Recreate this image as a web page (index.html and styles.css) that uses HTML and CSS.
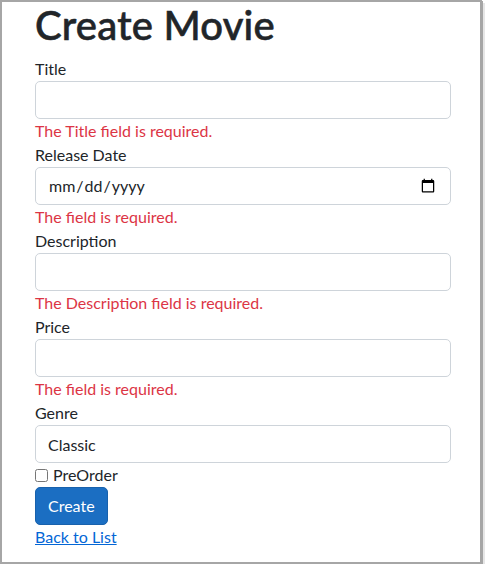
FILE: index.html
```html
<!DOCTYPE html>
<html lang="en">
<head>
<meta charset="utf-8">
<title>Create Movie</title>
<link rel="stylesheet" href="styles.css">
</head>
<body>
<div class="frame">
  <main class="content">
    <h1 class="title">Create Movie</h1>
    <form class="form">
      <div class="group">
        <label class="label" for="t">Title</label>
        <input class="control" id="t" type="text">
        <span class="error">The Title field is required.</span>
      </div>
      <div class="group">
        <label class="label" for="d">Release Date</label>
        <input class="control" id="d" type="date">
        <span class="error">The field is required.</span>
      </div>
      <div class="group">
        <label class="label" for="ds">Description</label>
        <input class="control" id="ds" type="text">
        <span class="error">The Description field is required.</span>
      </div>
      <div class="group">
        <label class="label" for="p">Price</label>
        <input class="control" id="p" type="text">
        <span class="error">The field is required.</span>
      </div>
      <div class="group">
        <label class="label" for="g">Genre</label>
        <input class="control" id="g" type="text" value="Classic">
      </div>
      <div class="check">
        <input class="checkbox" id="po" type="checkbox">
        <label class="check-label" for="po">PreOrder</label>
      </div>
      <div class="actions">
        <button class="btn" type="button">Create</button>
      </div>
    </form>
    <div class="back"><a class="link" href="#">Back to List</a></div>
  </main>
</div>
</body>
</html>
```

FILE: styles.css
```css
* { box-sizing: border-box; }
html, body { margin: 0; padding: 0; background: #ffffff; }
body {
  font-family: Lato, "Liberation Sans", sans-serif;
  font-size: 16px;
  line-height: 24px;
  color: #212529;
}
.frame {
  width: 482px;
  height: 564px;
  border: 2px solid #a6a6a6;
  box-shadow: 1px 1px 0 #a6a6a6, 3px 3px 0 #e6e6e6;
  background: #fff;
}
.content {
  width: 416px;
  margin-left: 33px;
}
.title {
  margin: -1px 0 8px 0;
  font-size: 40px;
  line-height: 48px;
  font-weight: 500;
  -webkit-text-stroke: 0.6px #212529;
  letter-spacing: 0.2px;
}
.form { margin: 0; }
.group { display: flex; flex-direction: column; }
.label { display: block; height: 24px; }
.control {
  display: block;
  width: 100%;
  height: 38px;
  padding: 6px 12px;
  font: inherit;
  color: #212529;
  background: #fff;
  border: 1px solid #ced4da;
  border-radius: 5px;
  outline: none;
}
.error { color: #dc3545; display: block; height: 24px; }
.check { display: flex; align-items: center; height: 24px; }
.checkbox { margin: 0 5px 0 0; width: 13px; height: 13px; }
.btn {
  display: inline-block;
  height: 38px;
  padding: 6px 12px;
  font: inherit;
  color: #fff;
  background: #1b6ec2;
  border: 1px solid #1861ac;
  border-radius: 5px;
}
.actions { height: 38px; }
.link { color: #0366d6; text-decoration: underline; }
```
